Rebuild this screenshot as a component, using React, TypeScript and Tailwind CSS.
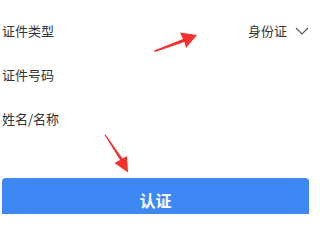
import React from "react";

const fields = ["证件类型", "证件号码", "姓名/名称"];

function Chevron() {
  return (
    <svg width="14" height="8" viewBox="0 0 14 8" fill="none" className="ml-[8px]">
      <path d="M1 1l6 6 6-6" stroke="#555" strokeWidth="1.1" />
    </svg>
  );
}

function Arrows() {
  return (
    <svg className="pointer-events-none absolute inset-0" width="320" height="214" viewBox="0 0 320 214">
      <g fill="#f5312e">
        <path d="M154 50.5 L183 39 L180 32.5 L197 35 L186 48 L184.5 42 L155 52 Z" />
        <path d="M104.5 135 L120 160 L114.5 163 L128 172.5 L127 156 L122.5 158.5 L105.5 134.5 Z" />
      </g>
    </svg>
  );
}

export default function App() {
  return (
    <div className="relative h-[214px] w-[320px] overflow-hidden bg-white font-['Noto_Sans_CJK_SC','Noto_Sans',sans-serif] text-[13px] text-[#333]">
      <div className="flex flex-col pl-[2px] pr-[11px] pt-[9px]">
        {fields.map((label, i) => (
          <div key={label} className="flex h-[44px] items-center justify-between">
            <span>{label}</span>
            {i === 0 && (
              <span className="flex items-center">
                身份证
                <Chevron />
              </span>
            )}
          </div>
        ))}
      </div>
      <div className="mt-[37px] px-[2px] pr-[11px]">
        <button className="flex h-[44px] w-full items-center justify-center rounded-[4px] bg-[#3d88f5] text-[16px] font-bold text-white">
          认证
        </button>
      </div>
      <Arrows />
    </div>
  );
}
